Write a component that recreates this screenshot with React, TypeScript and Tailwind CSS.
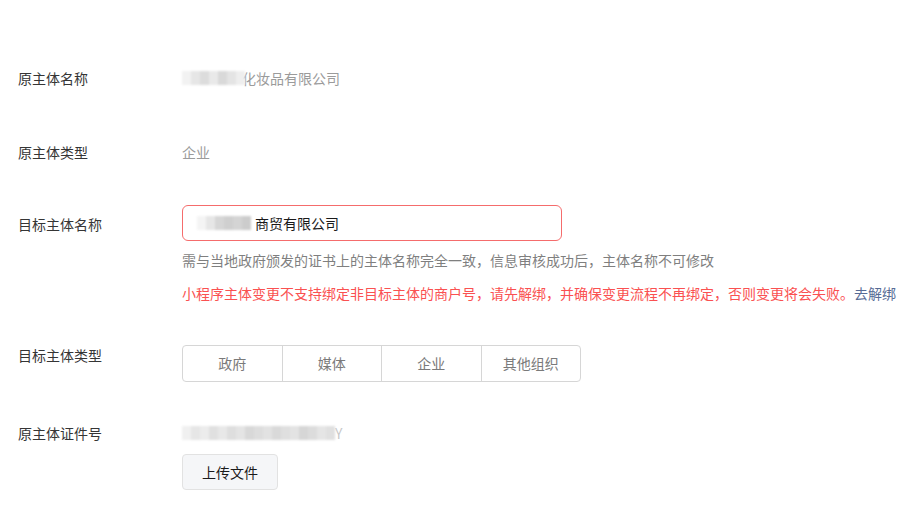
import React from "react";

const Blur = ({ cells }: { cells: string[] }) => (
  <span className="inline-flex h-[16px] items-center blur-[1.2px]">
    {cells.map((c, i) => (
      <span key={i} className="inline-block h-[14px] w-[9px]" style={{ background: c }} />
    ))}
  </span>
);

export default function App() {
  const font = { fontFamily: '"Noto Sans CJK SC", "Noto Sans", sans-serif' };
  return (
    <div className="w-[919px] h-[511px] bg-white text-[14px] leading-[20px] overflow-hidden" style={font}>
      <div className="pl-[18px] pt-[68px] flex flex-col">
        {/* Row 1 */}
        <div className="flex">
          <div className="w-[164px] text-[#353535]">原主体名称</div>
          <div className="flex items-center text-[#9b9b9b]">
            <Blur cells={["#f2f2f2", "#e6e6e6", "#dcdcdc", "#e9e9e9", "#d9d9d9", "#e4e4e4", "#eeeeee"]} />
            <span className="-ml-[3px]">化妆品有限公司</span>
          </div>
        </div>
        {/* Row 2 */}
        <div className="flex mt-[54px]">
          <div className="w-[164px] text-[#353535]">原主体类型</div>
          <div className="text-[#9b9b9b]">企业</div>
        </div>
        {/* Row 3 */}
        <div className="flex mt-[43px]">
          <div className="w-[164px] pt-[9px] text-[#353535]">目标主体名称</div>
          <div className="flex flex-col">
            <div className="w-[380px] h-[36px] border border-[#f56c6c] rounded-[6px] flex items-center pl-[14px] text-[#1a1a1a]">
              <Blur cells={["#f4f4f4", "#e6e6e6", "#d6d6d6", "#cfcfcf", "#d4d4d4", "#cccccc"]} />
              <span className="ml-[4px]">商贸有限公司</span>
            </div>
            <div className="mt-[9px] text-[#7f7f7f]">需与当地政府颁发的证书上的主体名称完全一致，信息审核成功后，主体名称不可修改</div>
            <div className="mt-[13px] text-[#fa5151] whitespace-nowrap">
              小程序主体变更不支持绑定非目标主体的商户号，请先解绑，并确保变更流程不再绑定，否则变更将会失败。<span className="text-[#576b95]">去解绑</span>
            </div>
          </div>
        </div>
        {/* Row 4 */}
        <div className="flex mt-[42px]">
          <div className="w-[164px] text-[#353535]">目标主体类型</div>
          <div className="flex h-[37px] w-[399px] border border-[#d6d6d6] rounded-[4px] text-[#7a7a7a]">
            {["政府", "媒体", "企业", "其他组织"].map((t, i) => (
              <div key={t} className={`flex-1 flex items-center justify-center pb-[2px] ${i > 0 ? "border-l border-[#d6d6d6]" : ""}`}>
                {t}
              </div>
            ))}
          </div>
        </div>
        {/* Row 5 */}
        <div className="flex mt-[41px]">
          <div className="w-[164px] text-[#353535]">原主体证件号</div>
          <div className="flex flex-col">
            <div className="flex items-center text-[#9b9b9b]">
              <Blur cells={["#f0f0f0", "#e6e6e6", "#ececec", "#e0e0e0", "#e8e8e8", "#dedede", "#e4e4e4", "#d8d8d8", "#dddddd", "#e2e2e2", "#d9d9d9", "#dfdfdf", "#e3e3e3", "#d6d6d6", "#dcdcdc", "#e5e5e5", "#e0e0e0"]} />
              <span className="text-[#c8c8c8]">Y</span>
            </div>
            <div className="mt-[11px] w-[96px] h-[36px] bg-[#f5f6f8] border border-[#e2e2e2] rounded-[4px] flex items-center justify-center pb-[1px] text-[#1a1a1a]">
              上传文件
            </div>
          </div>
        </div>
      </div>
    </div>
  );
}
